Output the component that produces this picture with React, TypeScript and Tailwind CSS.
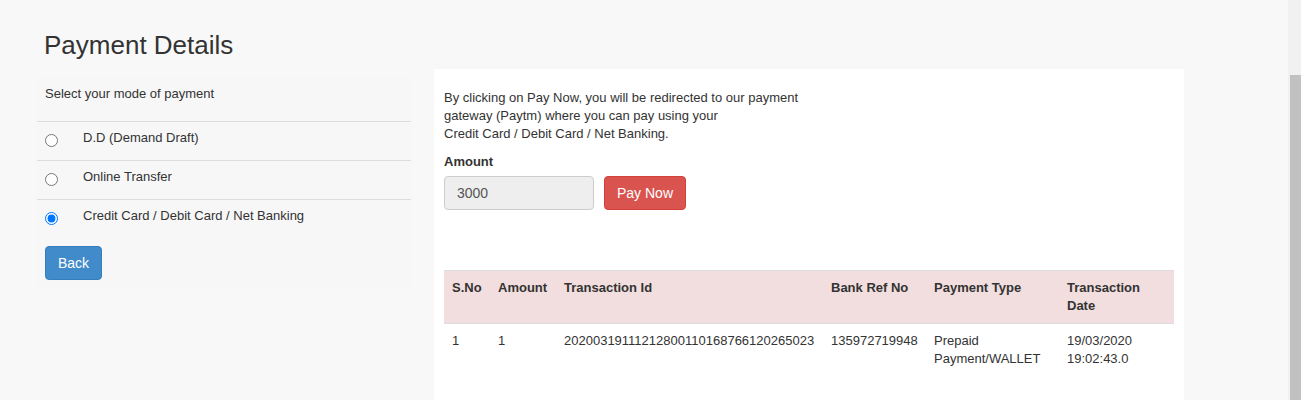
import { useState } from "react";

type Txn = {
  sno: number;
  amount: string;
  txnId: string;
  bankRef: string;
  paymentType: string;
  date: string;
  time: string;
};

const modes = [
  { id: "dd", label: "D.D (Demand Draft)" },
  { id: "online", label: "Online Transfer" },
  { id: "card", label: "Credit Card / Debit Card / Net Banking" },
];

const transactions: Txn[] = [
  {
    sno: 1,
    amount: "1",
    txnId: "20200319111212800110168766120265023",
    bankRef: "135972719948",
    paymentType: "Prepaid Payment/WALLET",
    date: "19/03/2020",
    time: "19:02:43.0",
  },
];

function ModeSelector({
  value,
  onChange,
}: {
  value: string;
  onChange: (v: string) => void;
}) {
  return (
    <div className="mt-[8px] w-[374px] bg-[#f7f7f7] pb-[8px]">
      <div className="h-[44px] px-[8px] pt-[8px]">Select your mode of payment</div>
      {modes.map((m) => (
        <label
          key={m.id}
          className="flex h-[39px] cursor-pointer items-start border-t border-[#ddd] px-[8px] pt-[7px]"
        >
          <input
            type="radio"
            name="mode"
            checked={value === m.id}
            onChange={() => onChange(m.id)}
            className="m-0 mt-[5px] h-[13px] w-[13px] shrink-0"
          />
          <span className="ml-[25px]">{m.label}</span>
        </label>
      ))}
      <button
        type="button"
        className="mt-[8px] ml-[8px] h-[34px] rounded-[4px] border border-[#357ebd] bg-[#428bca] px-[12px] text-[14px] text-white"
      >
        Back
      </button>
    </div>
  );
}

function TransactionTable({ rows }: { rows: Txn[] }) {
  return (
    <table className="mt-[60px] w-[730px] table-fixed border-collapse">
      <colgroup>
        <col className="w-[46px]" />
        <col className="w-[66px]" />
        <col className="w-[267px]" />
        <col className="w-[103px]" />
        <col className="w-[133px]" />
        <col className="w-[115px]" />
      </colgroup>
      <thead>
        <tr className="border-t border-b border-[#ddd] bg-[#f2dede] text-left align-top font-bold">
          <th className="p-[8px]">S.No</th>
          <th className="p-[8px]">Amount</th>
          <th className="p-[8px]">Transaction Id</th>
          <th className="p-[8px]">Bank Ref No</th>
          <th className="p-[8px]">Payment Type</th>
          <th className="p-[8px]">Transaction Date</th>
        </tr>
      </thead>
      <tbody>
        {rows.map((r) => (
          <tr key={r.sno} className="align-top">
            <td className="p-[8px]">{r.sno}</td>
            <td className="p-[8px]">{r.amount}</td>
            <td className="p-[8px]">{r.txnId}</td>
            <td className="p-[8px]">{r.bankRef}</td>
            <td className="p-[8px]">{r.paymentType}</td>
            <td className="p-[8px]">
              {r.date}
              <br />
              {r.time}
            </td>
          </tr>
        ))}
      </tbody>
    </table>
  );
}

export default function App() {
  const [mode, setMode] = useState("card");

  return (
    <div
      className="flex h-[400px] overflow-hidden bg-[#f8f8f8] text-[13px] leading-[18px] text-[#333]"
      style={{ fontFamily: '"Liberation Sans", Arial, sans-serif' }}
    >
      <div className="flex min-w-0 flex-1 flex-col pl-[37px]">
        <h1 className="mt-[31px] pl-[7px] text-[26px] leading-[29px] font-normal">
          Payment Details
        </h1>
        <div className="mt-[9px] flex flex-1 items-start">
          <ModeSelector value={mode} onChange={setMode} />
          <div className="ml-[23px] w-[750px] self-stretch bg-white px-[10px] pt-[20px]">
            <p className="whitespace-nowrap">
              By clicking on Pay Now, you will be redirected to our payment
              <br />
              gateway (Paytm) where you can pay using your
              <br />
              Credit Card / Debit Card / Net Banking.
            </p>
            <div className="mt-[10px] font-bold">Amount</div>
            <div className="mt-[5px] flex gap-[10px]">
              <input
                type="text"
                value="3000"
                readOnly
                className="h-[34px] w-[150px] rounded-[4px] border border-[#ccc] bg-[#eee] px-[12px] text-[14px] text-[#555] outline-none"
              />
              <button
                type="button"
                className="h-[34px] rounded-[4px] border border-[#d43f3a] bg-[#d9534f] px-[12px] text-[14px] text-white"
              >
                Pay Now
              </button>
            </div>
            <TransactionTable rows={transactions} />
          </div>
        </div>
      </div>
      <div className="w-[13px] shrink-0 bg-[#f1f1f1] pt-[75px] pl-[2px]">
        <div className="h-full bg-[#c1c1c1]" />
      </div>
    </div>
  );
}
